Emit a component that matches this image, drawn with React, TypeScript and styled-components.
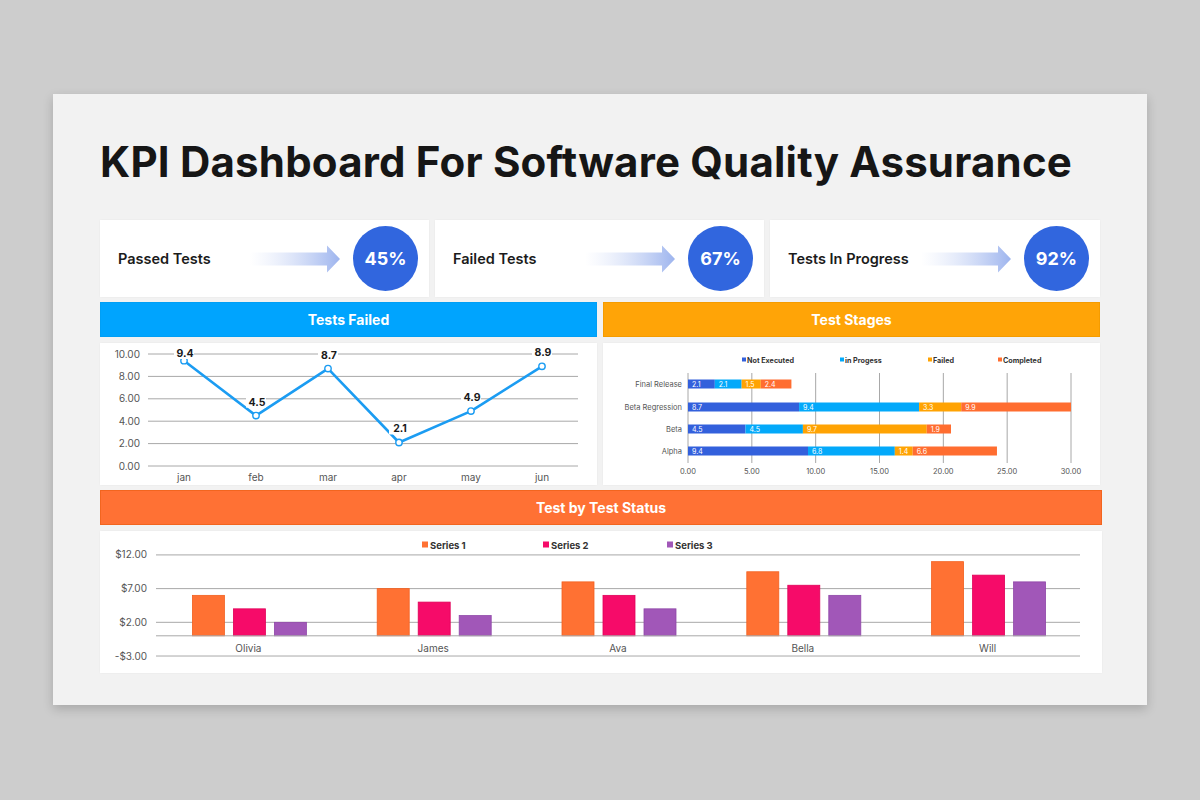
import React from "react";
import styled, { createGlobalStyle } from "styled-components";

const FONT = `Inter, "Noto Sans", "DejaVu Sans", sans-serif`;

const Global = createGlobalStyle`
  html, body { margin: 0; padding: 0; background: #cdcdcd; }
  body { font-family: ${FONT}; }
`;

const Page = styled.div`
  width: 1200px;
  height: 800px;
  box-sizing: border-box;
  padding: 94px 53px 0;
  background: #cdcdcd;
`;

const Slide = styled.div`
  width: 1094px;
  height: 611px;
  box-sizing: border-box;
  background: #f2f2f2;
  box-shadow: 0 4px 10px rgba(0, 0, 0, 0.18);
  padding: 42px 47px 0;
  display: flex;
  flex-direction: column;
`;

const Title = styled.h1`
  margin: 0 0 32px;
  font-family: ${FONT};
  font-weight: 700;
  font-size: 42px;
  line-height: 52px;
  color: #161616;
  letter-spacing: 0.2px;
  white-space: nowrap;
`;

const CardRow = styled.div`
  display: grid;
  grid-template-columns: 329px 329px 330px;
  column-gap: 6px;
  width: 1000px;
`;

const Card = styled.div`
  height: 77px;
  background: #ffffff;
  display: flex;
  align-items: center;
  padding: 0 11px 0 18px;
  box-shadow: 0 0 2px rgba(0, 0, 0, 0.05);
`;

const CardLabel = styled.div`
  font-size: 14.5px;
  font-weight: 600;
  color: #1b1b1b;
  white-space: nowrap;
`;

const ArrowWrap = styled.div`
  margin-left: auto;
  margin-right: 13px;
  width: 90px;
  height: 28px;
  display: flex;
`;

const Circle = styled.div`
  width: 65px;
  height: 65px;
  border-radius: 50%;
  background: #3166de;
  color: #ffffff;
  font-size: 18px;
  font-weight: 700;
  display: flex;
  align-items: center;
  justify-content: center;
  flex-shrink: 0;
`;

const TwoCols = styled.div`
  display: grid;
  grid-template-columns: 497px 497px;
  column-gap: 6px;
  width: 1000px;
  margin-top: 5px;
`;

const Column = styled.div`
  display: flex;
  flex-direction: column;
  gap: 6px;
`;

const Header = styled.div<{ $bg: string; $border: string }>`
  height: 35px;
  box-sizing: border-box;
  background: ${(p) => p.$bg};
  border: 1px solid ${(p) => p.$border};
  color: #ffffff;
  font-weight: 700;
  font-size: 14px;
  display: flex;
  align-items: center;
  justify-content: center;
`;

const Panel = styled.div<{ $w: number }>`
  width: ${(p) => p.$w}px;
  height: 142px;
  background: #ffffff;
  box-shadow: 0 0 2px rgba(0, 0, 0, 0.05);
  display: flex;
`;

const FullBlock = styled.div`
  display: flex;
  flex-direction: column;
  gap: 6px;
  margin-top: 5px;
  width: 1002px;
`;

const Svg = styled.svg`
  display: block;
  font-family: ${FONT};
`;

/* ---------- Arrow ---------- */
function Arrow({ id }: { id: string }) {
  return (
    <Svg width="90" height="28" viewBox="0 0 90 28">
      <defs>
        <linearGradient id={id} x1="0" x2="1" y1="0" y2="0">
          <stop offset="0" stopColor="#cfdaf6" stopOpacity="0" />
          <stop offset="1" stopColor="#9db4ee" stopOpacity="1" />
        </linearGradient>
      </defs>
      <polygon
        points="0,7.5 77,7.5 77,0.5 90,14 77,27.5 77,20.5 0,20.5"
        fill={`url(#${id})`}
      />
    </Svg>
  );
}

/* ---------- Line chart ---------- */
const lineData = [
  { m: "jan", v: 9.4 },
  { m: "feb", v: 4.5 },
  { m: "mar", v: 8.7 },
  { m: "apr", v: 2.1 },
  { m: "may", v: 4.9 },
  { m: "jun", v: 8.9 },
];

function LineChart() {
  const y = (v: number) => 123 - v * 11.2;
  const xs = [84, 156, 228, 299, 371, 442];
  const pts = lineData.map((d, i) => `${xs[i]},${y(d.v)}`).join(" ");
  return (
    <Svg width="497" height="142" viewBox="0 0 497 142">
      {[10, 8, 6, 4, 2, 0].map((t) => (
        <g key={t}>
          <line x1="48" x2="478" y1={y(t)} y2={y(t)} stroke="#a8a8a8" strokeWidth="1" />
          <text x="40" y={y(t) + 3.5} fontSize="10" fill="#555" textAnchor="end">
            {t.toFixed(2)}
          </text>
        </g>
      ))}
      <polyline points={pts} fill="none" stroke="#1b9cf2" strokeWidth="2.6" strokeLinejoin="round" />
      {lineData.map((d, i) => (
        <circle key={d.m} cx={xs[i]} cy={y(d.v)} r="3.2" fill="#fff" stroke="#1b9cf2" strokeWidth="1.4" />
      ))}
      {lineData.map((d, i) => {
        const ly = i === 0 ? 10 : y(d.v) - 14;
        return (
          <g key={d.m + "l"}>
            <rect x={xs[i] - 10} y={ly - 6} width="20" height="12" fill="#fff" />
            <text x={xs[i] + 1} y={ly + 4} fontSize="10.5" fontWeight="700" fill="#1a1a1a" textAnchor="middle">
              {d.v}
            </text>
          </g>
        );
      })}
      {lineData.map((d, i) => (
        <text key={d.m + "x"} x={xs[i]} y="138" fontSize="10" fill="#555" textAnchor="middle">
          {d.m}
        </text>
      ))}
    </Svg>
  );
}

/* ---------- Stacked bar chart ---------- */
const stageColors = ["#3360dc", "#03a9fa", "#ffa303", "#ff6d30"];
const stageNames = ["Not Executed", "in Progess", "Failed", "Completed"];
const stageLegendX = [139, 237, 325, 395];
const stages = [
  { name: "Final Release", y: 41, vals: [2.1, 2.1, 1.5, 2.4] },
  { name: "Beta Regression", y: 64, vals: [8.7, 9.4, 3.3, 9.9] },
  { name: "Beta", y: 86, vals: [4.5, 4.5, 9.7, 1.9] },
  { name: "Alpha", y: 108, vals: [9.4, 6.8, 1.4, 6.6] },
];

function StageChart() {
  const x0 = 85;
  const sc = 383 / 30;
  const xMax = x0 + 30 * sc;
  return (
    <Svg width="497" height="142" viewBox="0 0 497 142">
      {stageNames.map((n, i) => (
        <g key={n}>
          <rect x={stageLegendX[i]} y="14.5" width="4" height="4" fill={stageColors[i]} />
          <text x={stageLegendX[i] + 5} y="19.5" fontSize="7.2" fontWeight="700" fill="#333">
            {n}
          </text>
        </g>
      ))}
      {[0, 5, 10, 15, 20, 25, 30].map((t) => (
        <g key={t}>
          <line x1={x0 + t * sc} x2={x0 + t * sc} y1="30" y2="120" stroke="#a8a8a8" strokeWidth="1" />
          <text x={x0 + t * sc} y="131" fontSize="7.5" fill="#555" textAnchor="middle">
            {t.toFixed(2)}
          </text>
        </g>
      ))}
      {stages.map((s) => {
        let acc = 0;
        return (
          <g key={s.name}>
            <text x="79" y={s.y + 2.6} fontSize="7.5" fill="#555" textAnchor="end">
              {s.name}
            </text>
            {s.vals.map((v, i) => {
              const xa = x0 + acc * sc;
              acc += v;
              const xb = Math.min(x0 + acc * sc, xMax);
              return (
                <g key={i}>
                  <rect x={xa} y={s.y - 4.5} width={Math.max(0, xb - xa)} height="9" fill={stageColors[i]} />
                  <text x={xa + 4} y={s.y + 2.5} fontSize="7" fill="#fff">
                    {v}
                  </text>
                </g>
              );
            })}
          </g>
        );
      })}
    </Svg>
  );
}

/* ---------- Clustered bar chart ---------- */
const seriesColors = ["#ff7133", "#f60b69", "#a157b8"];
const seriesStroke = ["#f2601f", "#e00058", "#8f47a8"];
const people = [
  { n: "Olivia", v: [6, 4, 2] },
  { n: "James", v: [7, 5, 3] },
  { n: "Ava", v: [8, 6, 4] },
  { n: "Bella", v: [9.5, 7.5, 6] },
  { n: "Will", v: [11, 9, 8] },
];

function StatusChart() {
  const zero = 104.8;
  const u = 6.74;
  const y = (v: number) => zero - v * u;
  const left = 56;
  const right = 980;
  const cw = (right - left) / 5;
  return (
    <Svg width="1002" height="142" viewBox="0 0 1002 142">
      {["Series 1", "Series 2", "Series 3"].map((s, i) => (
        <g key={s}>
          <rect x={[322, 443, 567][i]} y="10.5" width="6" height="6" fill={seriesColors[i]} />
          <text x={[322, 443, 567][i] + 8} y="17.5" fontSize="9.5" fontWeight="700" fill="#333">
            {s}
          </text>
        </g>
      ))}
      {[12, 7, 2, -3].map((t) => (
        <g key={t}>
          <line x1={left} x2={right} y1={y(t)} y2={y(t)} stroke="#a8a8a8" strokeWidth="1" />
          <text x="47" y={y(t) + 3.5} fontSize="10" fill="#555" textAnchor="end">
            {t < 0 ? `-$${Math.abs(t).toFixed(2)}` : `$${t.toFixed(2)}`}
          </text>
        </g>
      ))}
      {people.map((p, ci) => {
        const c = left + cw * (ci + 0.5);
        return (
          <g key={p.n}>
            {p.v.map((v, i) => (
              <rect
                key={i}
                x={c - 56 + i * 41}
                y={y(v)}
                width="32"
                height={zero - y(v)}
                fill={seriesColors[i]}
                stroke={seriesStroke[i]}
                strokeWidth="0.8"
              />
            ))}
            <text x={c} y="121" fontSize="10" fill="#555" textAnchor="middle">
              {p.n}
            </text>
          </g>
        );
      })}
      <line x1={left} x2={right} y1={zero} y2={zero} stroke="#a8a8a8" strokeWidth="1" />
    </Svg>
  );
}

const kpis = [
  { label: "Passed Tests", value: "45%" },
  { label: "Failed Tests", value: "67%" },
  { label: "Tests In Progress", value: "92%" },
];

export default function App() {
  return (
    <Page>
      <Global />
      <Slide>
        <Title>KPI Dashboard For Software Quality Assurance</Title>
        <CardRow>
          {kpis.map((k, i) => (
            <Card key={k.label}>
              <CardLabel>{k.label}</CardLabel>
              <ArrowWrap>
                <Arrow id={`arrow-grad-${i}`} />
              </ArrowWrap>
              <Circle>{k.value}</Circle>
            </Card>
          ))}
        </CardRow>
        <TwoCols>
          <Column>
            <Header $bg="#00a4fe" $border="#009ff5">Tests Failed</Header>
            <Panel $w={497}>
              <LineChart />
            </Panel>
          </Column>
          <Column>
            <Header $bg="#ffa407" $border="#f59c00">Test Stages</Header>
            <Panel $w={497}>
              <StageChart />
            </Panel>
          </Column>
        </TwoCols>
        <FullBlock>
          <Header $bg="#ff7134" $border="#f2651f">Test by Test Status</Header>
          <Panel $w={1002}>
            <StatusChart />
          </Panel>
        </FullBlock>
      </Slide>
    </Page>
  );
}
